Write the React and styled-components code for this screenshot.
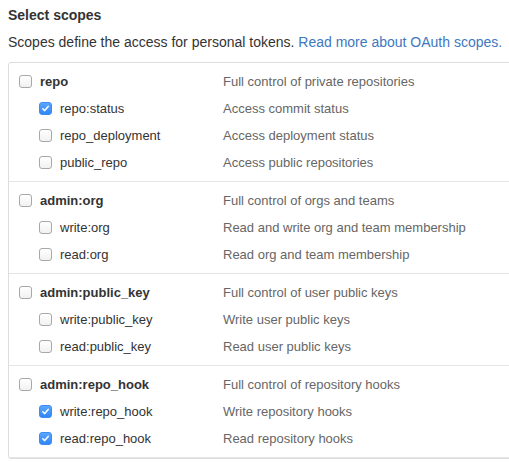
import React from 'react';
import styled, { createGlobalStyle } from 'styled-components';

const GlobalStyle = createGlobalStyle`
	body {
		margin: 0;
		overflow: hidden;
		background: #fff;
		font-family: 'Liberation Sans', Arial, sans-serif;
		color: #333;
	}
`;

const scopes = [
	{
		name: 'repo',
		desc: 'Full control of private repositories',
		children: [
			{ name: 'repo:status', desc: 'Access commit status', checked: true },
			{ name: 'repo_deployment', desc: 'Access deployment status' },
			{ name: 'public_repo', desc: 'Access public repositories' },
		],
	},
	{
		name: 'admin:org',
		desc: 'Full control of orgs and teams',
		children: [
			{ name: 'write:org', desc: 'Read and write org and team membership' },
			{ name: 'read:org', desc: 'Read org and team membership' },
		],
	},
	{
		name: 'admin:public_key',
		desc: 'Full control of user public keys',
		children: [
			{ name: 'write:public_key', desc: 'Write user public keys' },
			{ name: 'read:public_key', desc: 'Read user public keys' },
		],
	},
	{
		name: 'admin:repo_hook',
		desc: 'Full control of repository hooks',
		children: [
			{ name: 'write:repo_hook', desc: 'Write repository hooks', checked: true },
			{ name: 'read:repo_hook', desc: 'Read repository hooks', checked: true },
		],
	},
];

const Page = styled.div`
	padding: 5px 0 0 8px;
`;

const Title = styled.h3`
	margin: 0;
	font-size: 14px;
	line-height: 20px;
	font-weight: bold;
	color: #333;
`;

const Note = styled.p`
	margin: 7px 0 10px;
	font-size: 14px;
	line-height: 20px;
	color: #333;
	white-space: nowrap;
`;

const Link = styled.a`
	color: #4078c0;
	text-decoration: none;
`;

const ScopeBox = styled.div`
	width: 520px;
	border: 1px solid #ddd;
	border-radius: 3px;
`;

const Group = styled.div`
	padding: 5px 0;
	border-bottom: 1px solid #e5e5e5;
`;

const Row = styled.label`
	display: grid;
	grid-template-columns: 214px 1fr;
	align-items: center;
	height: 27px;
	font-size: 13px;
	white-space: nowrap;
`;

const Name = styled.span`
	display: flex;
	align-items: center;
	gap: 8px;
	padding-left: ${(p) => (p.$child ? 30 : 10)}px;
	font-weight: ${(p) => (p.$child ? 'normal' : 'bold')};
	color: #333;
`;

const Desc = styled.span`
	color: #666;
`;

const Box = styled.span`
	display: inline-flex;
	align-items: center;
	justify-content: center;
	box-sizing: border-box;
	width: 13px;
	height: 13px;
	border-radius: 3px;
	border: 1px solid ${(p) => (p.$checked ? '#3b8cf5' : '#a8a8a8')};
	background: ${(p) =>
		p.$checked ? 'linear-gradient(#5aa6ff, #2f86f6)' : 'linear-gradient(#fff, #f1f1f1)'};
`;

function Check({ checked }) {
	return (
		<Box $checked={checked}>
			{checked && (
				<svg width="9" height="9" viewBox="0 0 9 9">
					<path d="M1.8 4.8 L3.7 6.6 L7.2 2.4" fill="none" stroke="#fff" strokeWidth="1.5" strokeLinecap="round" strokeLinejoin="round" />
				</svg>
			)}
		</Box>
	);
}

export default function App() {
	return (
		<>
			<GlobalStyle />
			<Page>
				<Title>Select scopes</Title>
				<Note>
					Scopes define the access for personal tokens. <Link href="#">Read more about OAuth scopes.</Link>
				</Note>
				<ScopeBox>
					{scopes.map((group) => (
						<Group key={group.name}>
							<Row>
								<Name>
									<Check checked={group.checked} />
									{group.name}
								</Name>
								<Desc>{group.desc}</Desc>
							</Row>
							{group.children.map((item) => (
								<Row key={item.name}>
									<Name $child>
										<Check checked={item.checked} />
										{item.name}
									</Name>
									<Desc>{item.desc}</Desc>
								</Row>
							))}
						</Group>
					))}
				</ScopeBox>
			</Page>
		</>
	);
}
